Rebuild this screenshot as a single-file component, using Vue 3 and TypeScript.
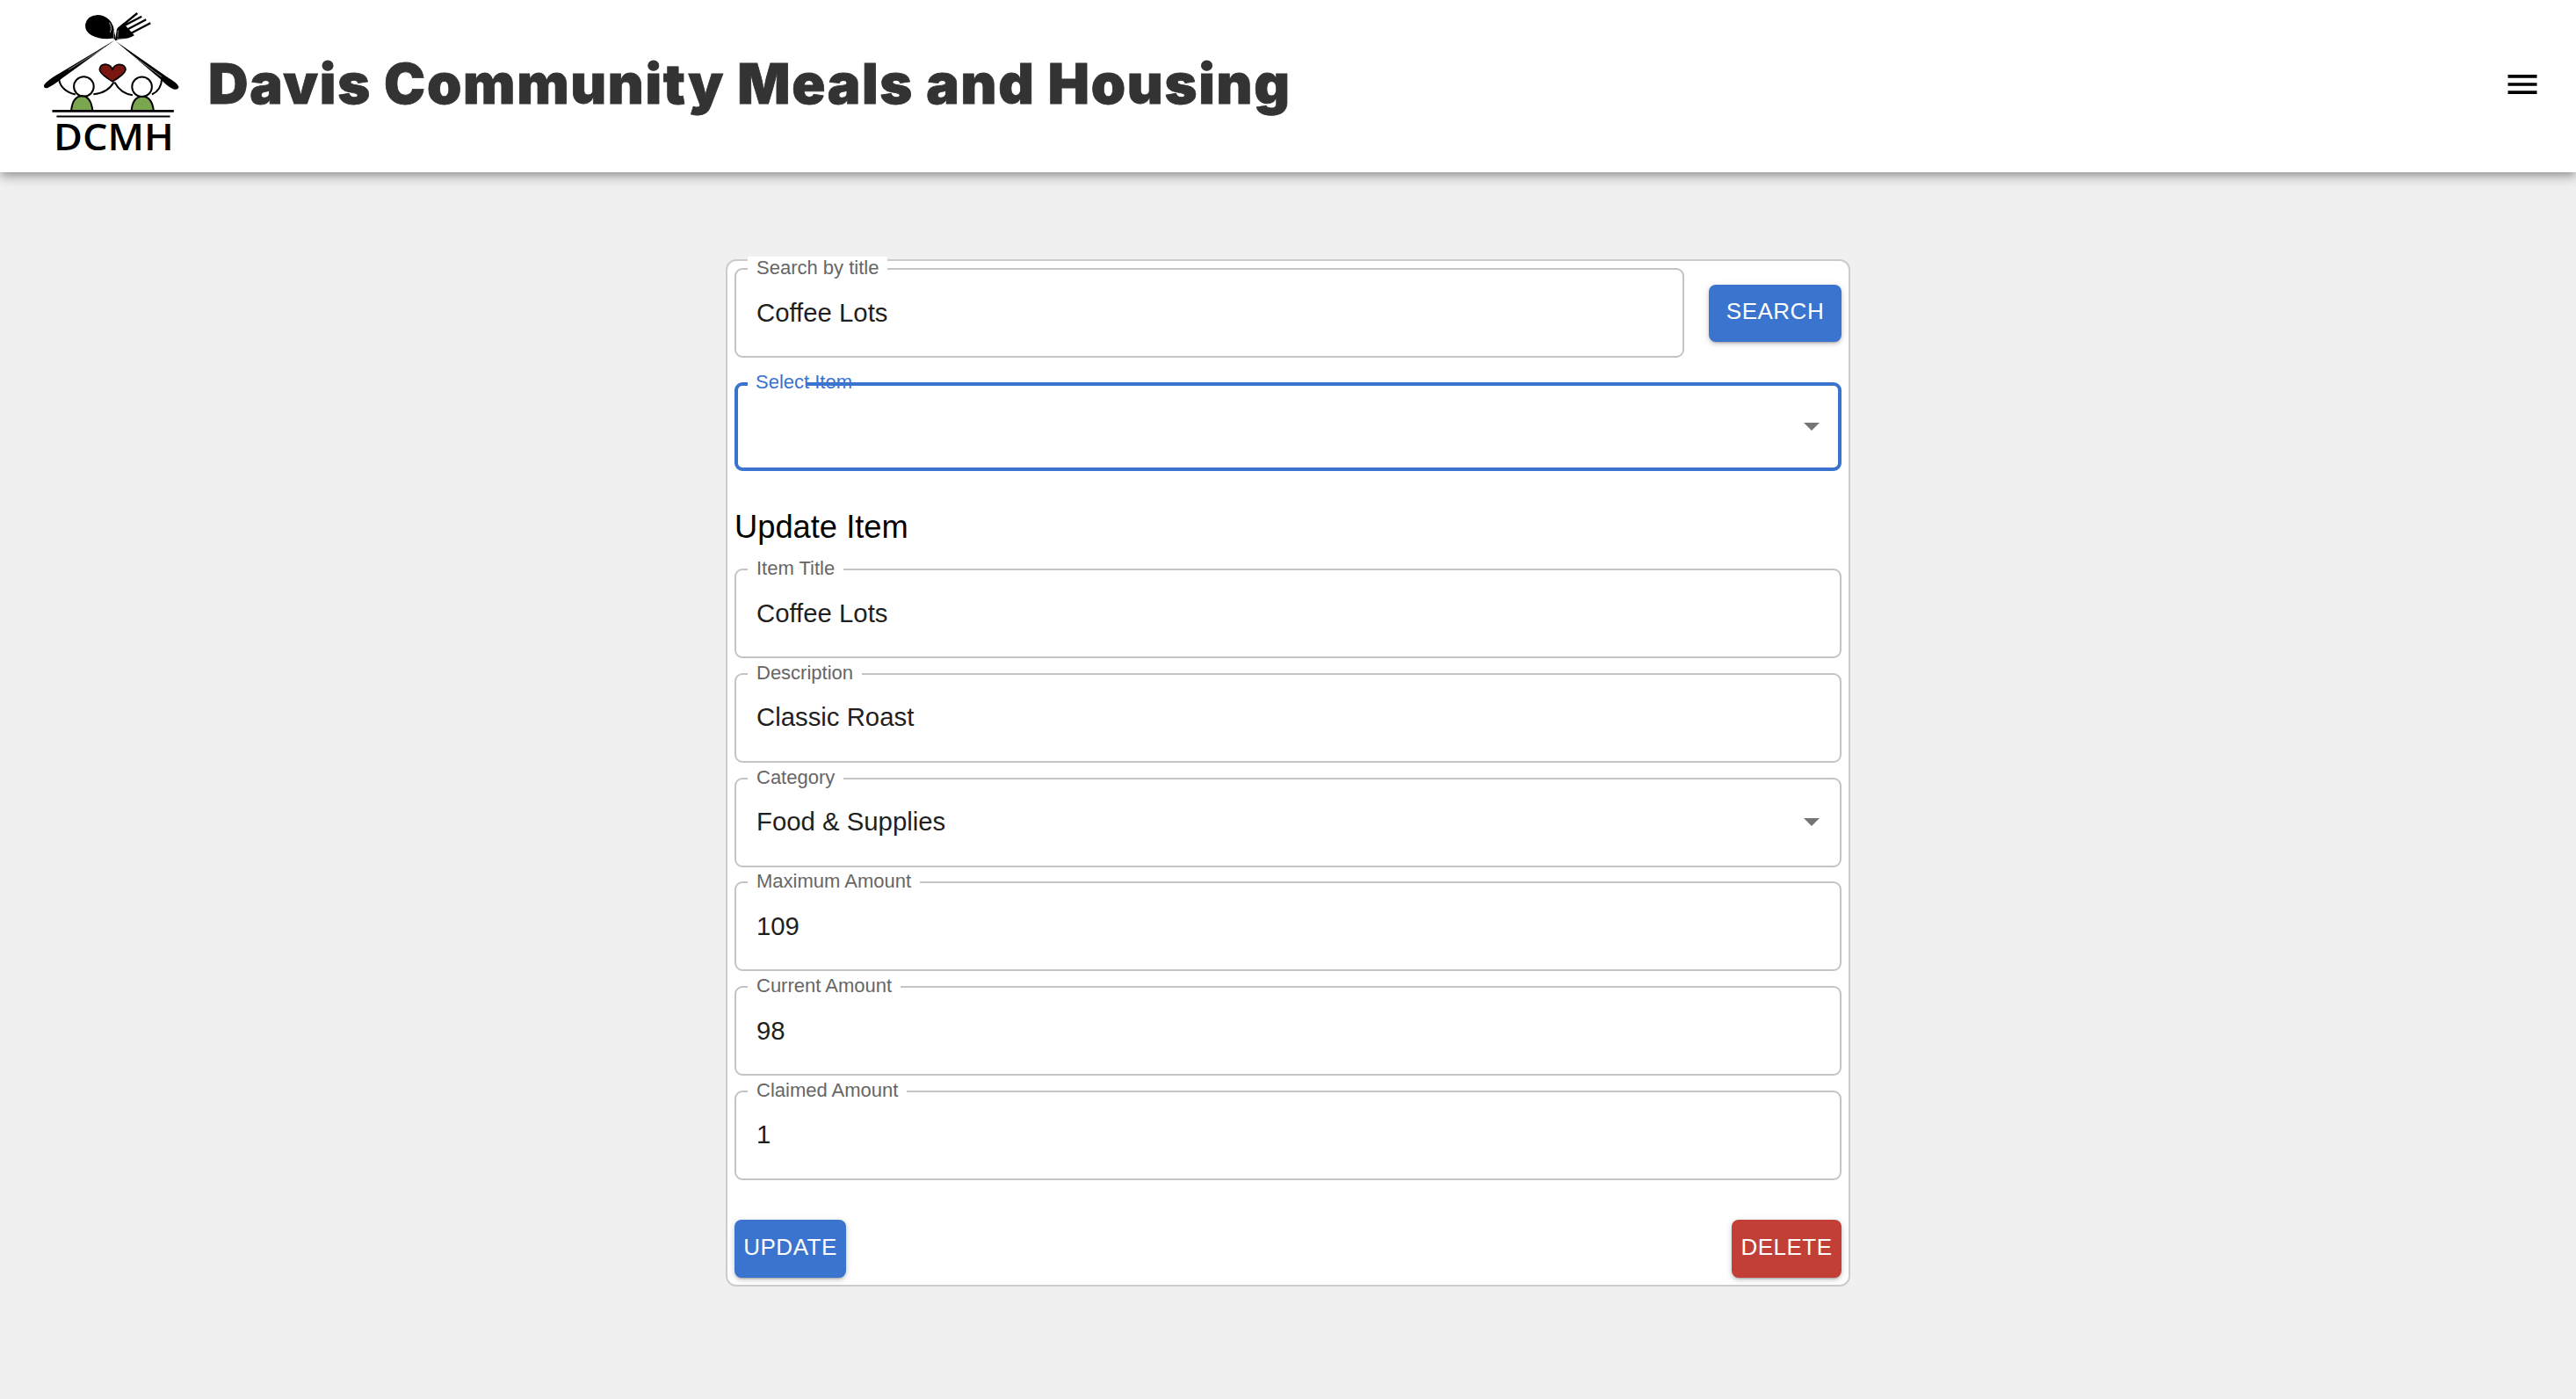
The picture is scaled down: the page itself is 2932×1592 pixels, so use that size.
<script setup lang="ts">
interface Field {
  label: string
  value: string
  select?: boolean
}

const fields: Field[] = [
  { label: 'Item Title', value: 'Coffee Lots' },
  { label: 'Description', value: 'Classic Roast' },
  { label: 'Category', value: 'Food & Supplies', select: true },
  { label: 'Maximum Amount', value: '109' },
  { label: 'Current Amount', value: '98' },
  { label: 'Claimed Amount', value: '1' },
]
</script>

<template>
  <header class="bar">
    <svg class="logo" viewBox="140 40 480 490" aria-label="DCMH logo">
      <!-- fork handle (roof left) -->
      <path d="M392 138 L205 250 Q160 275 149 292 Q146 304 160 302 Q180 294 212 268 Z" fill="#000" />
      <path d="M385 146 L232 240" stroke="#fff" stroke-width="1.6" fill="none" />
      <!-- spoon handle (roof right) -->
      <path d="M392 140 L400 146 L575 268 Q605 285 610 298 Q608 310 592 306 Q570 296 548 272 Z" fill="#000" />
      <path d="M412 162 L552 264" stroke="#fff" stroke-width="1.6" fill="none" />
      <!-- spoon -->
      <path d="M396 140 L384 132 Q345 138 312 122 Q288 108 290 84 Q296 54 332 52 Q372 54 386 92 Q390 115 396 140 Z" fill="#000" />
      <path d="M372 78 Q383 95 375 112" stroke="#fff" stroke-width="2" fill="none" />
      <path d="M388 104 Q386 122 388 134" stroke="#fff" stroke-width="1.5" fill="none" />
      <!-- fork -->
      <path d="M392 140 L398 100 L420 80 L458 122 Q440 134 404 136 Z" fill="#000" />
      <path d="M402 100 L468 46 M417 92 L483 57 M430 104 L498 68 M444 116 L513 80" stroke="#000" stroke-width="7" fill="none" />
      <path d="M398 134 L444 134 L458 124" stroke="#fff" stroke-width="1.6" fill="none" />
      <path d="M401 128 L402 104" stroke="#fff" stroke-width="1.5" fill="none" />
      <!-- arms -->
      <path d="M200 272 Q206 312 256 324 M318 323 Q366 320 388 282" stroke="#000" stroke-width="6" fill="none" />
      <path d="M390 282 Q412 322 452 326 M518 324 Q550 310 552 270" stroke="#000" stroke-width="6" fill="none" />
      <!-- heart -->
      <path d="M383 280 Q338 252 339 238 Q342 220 362 221 Q378 224 383 238 Q390 222 406 221 Q428 222 428 240 Q424 256 383 280 Z" fill="#7a1610" stroke="#000" stroke-width="5" />
      <!-- children -->
      <circle cx="285" cy="297" r="34" fill="#fff" stroke="#000" stroke-width="6" />
      <circle cx="484" cy="298" r="34" fill="#fff" stroke="#000" stroke-width="6" />
      <path d="M242 380 Q246 330 279 329 Q310 330 315 380 Z" fill="#7ba650" stroke="#000" stroke-width="6" />
      <path d="M448 380 Q452 332 486 331 Q518 332 524 380 Z" fill="#7ba650" stroke="#000" stroke-width="6" />
      <!-- table -->
      <path d="M177 381 H593" stroke="#000" stroke-width="8" />
      <path d="M192 399 H580" stroke="#000" stroke-width="6" />
      <text x="182" y="514" textLength="411" lengthAdjust="spacingAndGlyphs" class="logo-text">DCMH</text>
    </svg>
    <h1 class="title">Davis Community Meals and Housing</h1>
    <svg class="menu" viewBox="0 0 24 24" aria-label="menu">
      <path d="M3 18h18v-2H3v2zm0-5h18v-2H3v2zm0-7v2h18V6H3z" />
    </svg>
  </header>

  <main class="card">
    <div class="search-row">
      <div class="field grow">
        <span class="label">Search by title</span>
        <span class="value">Coffee Lots</span>
      </div>
      <button class="btn search" type="button">Search</button>
    </div>

    <div class="field focused">
      <span class="label">Select Item</span>
      <span class="value"></span>
      <svg class="arrow" viewBox="0 0 18 9"><path d="M0 0h18L9 9z" /></svg>
    </div>

    <h2 class="heading">Update Item</h2>

    <div class="stack">
      <div v-for="f in fields" :key="f.label" class="field">
        <span class="label">{{ f.label }}</span>
        <span class="value">{{ f.value }}</span>
        <svg v-if="f.select" class="arrow" viewBox="0 0 18 9"><path d="M0 0h18L9 9z" /></svg>
      </div>
    </div>

    <div class="actions">
      <button class="btn update" type="button">Update</button>
      <button class="btn delete" type="button">Delete</button>
    </div>
  </main>
</template>

<style>
html,
body {
  background: #f0f0f0;
}
</style>

<style scoped>
.bar {
  height: 196px;
  background: #fff;
  display: flex;
  align-items: center;
  padding: 0 39px 0 47px;
  box-sizing: border-box;
  box-shadow: 0 4px 8px -2px rgba(0, 0, 0, 0.25), 0 8px 10px rgba(0, 0, 0, 0.12), 0 2px 20px rgba(0, 0, 0, 0.1);
}
.logo {
  width: 160px;
  height: 163px;
  flex: none;
  margin-bottom: 7px;
  overflow: visible;
}
.logo-text {
  font-family: "Open Sans", sans-serif;
  font-size: 126px;
  font-weight: 600;
  fill: #000;
}
.title {
  margin: 0 0 6px 30px;
  flex: 1;
  font-family: Inter, sans-serif;
  font-weight: 900;
  font-size: 63px;
  letter-spacing: 1.7px;
  -webkit-text-stroke: 0.8px #333;
  color: #333;
  white-space: nowrap;
}
.menu {
  width: 44px;
  height: 44px;
  fill: #000;
  flex: none;
  margin-bottom: 4px;
}
.card {
  width: 1280px;
  box-sizing: border-box;
  margin: 99px auto 0;
  padding: 8px;
  background: #fff;
  border: 2px solid #ccc;
  border-radius: 12px;
  font-family: "Liberation Sans", Arial, sans-serif;
}
.search-row {
  display: flex;
  align-items: center;
  gap: 28px;
  margin-bottom: 28px;
}
.grow {
  flex: 1;
}
.field {
  position: relative;
  height: 102px;
  box-sizing: border-box;
  display: flex;
  align-items: center;
  justify-content: space-between;
  padding: 0 23px 1px 23px;
  background: #fff;
  border: 2px solid #c4c4c4;
  border-radius: 9px;
}
.label {
  position: absolute;
  top: -15px;
  left: 13px;
  padding: 0 10px;
  background: #fff;
  font-size: 22px;
  line-height: 26px;
  color: #666;
  white-space: nowrap;
}
.value {
  font-size: 29.33px;
  color: #1f1f1f;
}
.arrow {
  width: 18px;
  height: 9px;
  fill: #757575;
  flex: none;
}
.focused {
  height: 101px;
  border: 4px solid #3a74ce;
  padding: 0 21px 1px 22px;
}
.focused .label {
  top: -17px;
  left: 11px;
  padding: 0 10px 0 9px;
  background: linear-gradient(to right, #fff 67px, transparent 67px);
  color: #3a74ce;
}
.heading {
  margin: 0;
  height: 111px;
  box-sizing: border-box;
  padding-top: 42px;
  font-size: 36.3px;
  line-height: 44px;
  font-weight: 400;
  color: #000;
}
.stack {
  display: flex;
  flex-direction: column;
  gap: 16.8px;
}
.actions {
  display: flex;
  justify-content: space-between;
  margin-top: 45px;
}
.btn {
  height: 66px;
  border: 0;
  border-radius: 8px;
  color: #fff;
  font-family: "Liberation Sans", Arial, sans-serif;
  font-size: 26px;
  letter-spacing: 0.5px;
  text-transform: uppercase;
  padding: 0 0 3px;
  box-shadow: 0 3px 2px -2px rgba(0, 0, 0, 0.2), 0 2px 4px rgba(0, 0, 0, 0.14), 0 2px 10px rgba(0, 0, 0, 0.12);
}
.search {
  width: 151px;
  height: 65px;
  flex: none;
  background: #3a74ce;
}
.update {
  width: 127px;
  background: #3a74ce;
}
.delete {
  width: 125px;
  background: #c23f38;
}
</style>
